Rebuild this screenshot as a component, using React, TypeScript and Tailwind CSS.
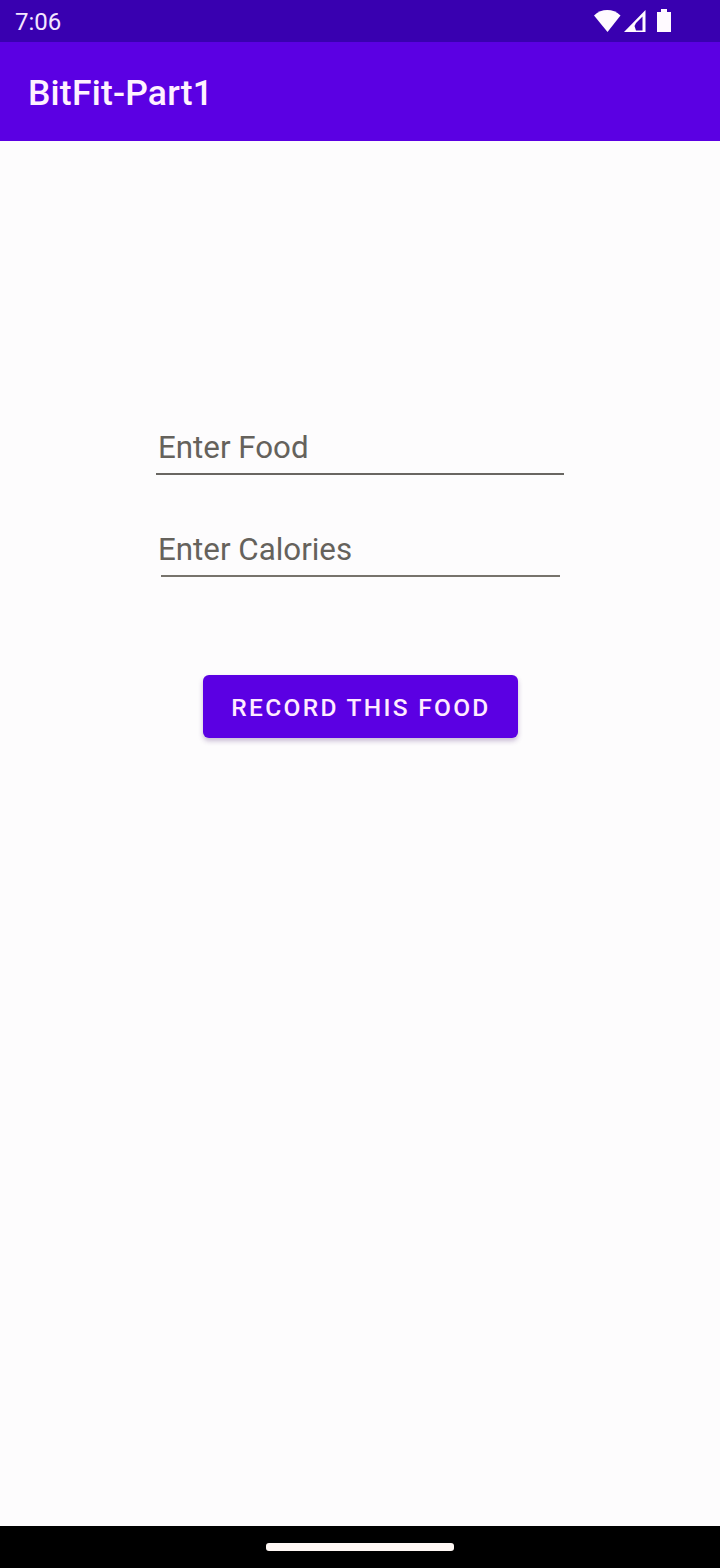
import React from "react";

function StatusBar() {
  return (
    <div className="flex h-[42px] shrink-0 items-center justify-between bg-[#3900b0] pl-[15px] pr-[48px] text-[#f4e6ff]">
      <span className="mt-[2px] text-[24px] leading-[28px]">7:06</span>
      <svg width="78" height="24" viewBox="0 0 78 24" fill="#fffaff">
        <path d="M0 6.500C7.500-.8 19-.8 26.500 6.500L13.500 23Z" />
        <path fillRule="evenodd" d="M30 23 51.500 1V23ZM42 21.500H48.500V7.500L42 14L40.500 17Z" />
        <path d="M63 3H67V0H73V3H77V23H63Z" />
      </svg>
    </div>
  );
}

function Field({ label, line }: { label: string; line: string }) {
  return (
    <label className="flex h-[102px] w-[410px] flex-col items-center">
      <input
        type="text"
        placeholder={label}
        className="h-[44px] w-full bg-transparent pl-[3px] text-[31.300px] text-[#55524f] outline-none placeholder:text-[#65625c]"
      />
      <span className={line} />
    </label>
  );
}

export default function App() {
  return (
    <div className="flex h-[1568px] w-[720px] flex-col bg-[#fdfcfd] font-['Roboto',sans-serif]">
      <StatusBar />
      <header className="flex h-[99px] shrink-0 items-center bg-[#5b00e3] pl-[28px]">
        <h1 className="mt-[2px] text-[35.500px] leading-[40px] font-medium tracking-[0.200px] text-[#fff1ff]">BitFit-Part1</h1>
      </header>
      <main className="flex flex-1 flex-col items-center pt-[285px]">
        <Field label="Enter Food" line="mt-[3px] h-[2px] w-[408px] bg-[#696662]" />
        <Field label="Enter Calories" line="mt-[3px] h-[2px] w-[399px] bg-[#77736c]" />
        <button className="mt-[45px] flex h-[63px] w-[315px] items-center justify-center rounded-[6px] bg-[#5b00e3] pl-[2px] pt-[3px] text-[24.500px] font-medium tracking-[2.300px] text-[#ffeaff] shadow-[0_3px_5px_rgba(80,40,120,0.3)]">
          RECORD THIS FOOD
        </button>
      </main>
      <footer className="flex h-[42px] shrink-0 justify-center bg-black pt-[17px]">
        <div className="h-[8px] w-[188px] rounded-[3px] bg-[#fff8f5]" />
      </footer>
    </div>
  );
}
